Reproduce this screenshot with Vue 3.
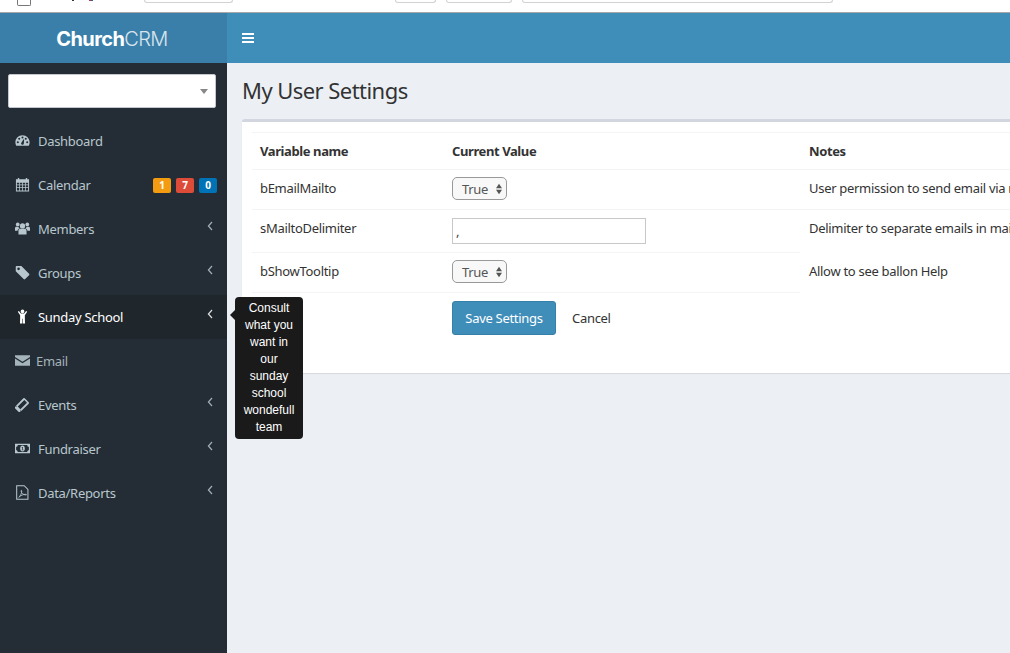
<template>
  <div class="browser-bar">
    <span class="tab-icon"></span>
    <span class="dot" style="margin-left: 41px; background: #334"></span>
    <span class="dot" style="margin-left: 15px; background: #c33"></span>
    <span class="dot" style="background: #26a"></span>
    <span class="pill" style="width: 87px; margin-left: 51px"></span>
    <span class="pill" style="width: 39px; margin-left: 162px"></span>
    <span class="pill" style="width: 64px; margin-left: 10px"></span>
    <span class="pill" style="width: 309px; margin-left: 10px"></span>
  </div>
  <div class="page">
    <aside class="sidebar">
      <div class="logo"><b>Church</b><span>CRM</span></div>
      <div class="search"><i class="caret"></i></div>
      <ul class="menu">
        <li v-for="item in menu" :key="item.label" :class="{ active: item.active, email: item.label === 'Email' }">
          <svg class="ico" viewBox="0 0 16 16" v-html="item.icon"></svg>
          <span class="label">{{ item.label }}</span>
          <svg v-if="item.arrow" class="chev" viewBox="0 0 6 10"><path d="M5 1 1.400 5 5 9" fill="none" stroke="currentColor" stroke-width="1.200"/></svg>
          <span v-if="item.badges" class="badges">
            <em v-for="b in item.badges" :key="b.text" :style="{ background: b.color }">{{ b.text }}</em>
          </span>
        </li>
      </ul>
    </aside>
    <main class="main">
      <header class="topbar">
        <svg class="burger" viewBox="0 0 12 10"><path d="M0 0h12v2H0zM0 4h12v2H0zM0 8h12v2H0z" fill="#fff"/></svg>
      </header>
      <h1>My User Settings</h1>
      <section class="box">
        <div class="row head">
          <div class="c1">Variable name</div>
          <div class="c2">Current Value</div>
          <div class="c3">Notes</div>
        </div>
        <div v-for="r in rows" :key="r.name" class="row" :class="r.cls">
          <div class="c1">{{ r.name }}</div>
          <div class="c2">
            <span v-if="r.select" class="fake-select">True<svg viewBox="0 0 7 12"><path d="M3.500 0 7 5H0zM3.500 12 0 7h7z" fill="#555"/></svg></span>
            <input v-else class="text-input" value="," readonly />
          </div>
          <div class="c3">{{ r.note }}</div>
        </div>
        <div class="actions">
          <button class="save">Save Settings</button>
          <a class="cancel">Cancel</a>
        </div>
      </section>
      <div class="tooltip">Consult what you want in our sunday school wondefull team</div>
    </main>
  </div>
</template>

<script setup>
const menu = [
  { label: 'Dashboard', icon: '<path fill="currentColor" fill-rule="evenodd" d="M8 2.300C3.800 2.300.4 5.700.4 9.900c0 1.300.3 2.500.9 3.600h13.400c.6-1.100.9-2.300.9-3.600 0-4.200-3.400-7.600-7.600-7.600zM3 11a1.100 1.100 0 1 1 0-2.200A1.100 1.100 0 0 1 3 11zm1.500-3.700a1.100 1.100 0 1 1 0-2.200 1.100 1.100 0 0 1 0 2.200zM8 5.800a1.100 1.100 0 1 1 0-2.200 1.100 1.100 0 0 1 0 2.200zm.9 6.500a1.500 1.500 0 0 1-2.300-1.700l2.500-4 .7.200-.4 4.500c0 .4-.2.700-.5 1zm2.600-5a1.100 1.100 0 1 1 0-2.200 1.100 1.100 0 0 1 0 2.200zM13 11a1.100 1.100 0 1 1 0-2.200 1.100 1.100 0 0 1 0 2.200z"/>' },
  { label: 'Calendar', badges: [{ text: '1', color: '#f39c12' }, { text: '7', color: '#dd4b39' }, { text: '0', color: '#0073b7' }], icon: '<path fill="currentColor" fill-rule="evenodd" d="M1 2.500h2V1h1.500v1.500h7V1H13v1.500h2V15.500H1zM2 6v2h2.500V6zm3.300 0v2h2.300V6zm3.100 0v2h2.300V6zm3.100 0v2H14V6zM2 8.800v2h2.500v-2zm3.300 0v2h2.300v-2zm3.100 0v2h2.300v-2zm3.100 0v2H14v-2zM2 11.600v2.900h2.500v-2.900zm3.300 0v2.900h2.300v-2.900zm3.100 0v2.900h2.300v-2.900zm3.100 0v2.900H14v-2.900z"/>' },
  { label: 'Members', arrow: true, icon: '<g fill="currentColor"><circle cx="8" cy="5.300" r="2.800"/><circle cx="2.900" cy="3.600" r="2"/><circle cx="13.100" cy="3.600" r="2"/><path d="M3.700 14.300V10.400C3.700 9 4.700 8.300 6 8.300h4c1.300 0 2.300.7 2.300 2.100v3.900zM0 10.300V7.600c0-1 .7-1.600 1.600-1.600h2c.2.900.7 1.500 1.400 2-1.300.4-2.200 1.100-2.200 2.300zM16 10.300V7.600c0-1-.7-1.600-1.600-1.600h-2c-.2.900-.7 1.500-1.400 2 1.300.4 2.200 1.100 2.200 2.300z"/></g>' },
  { label: 'Groups', arrow: true, icon: '<path fill="currentColor" fill-rule="evenodd" d="M.8 2c0-.6.5-1 1-1h5l8.200 8.200c.5.500.5 1.100 0 1.600L10.800 15c-.5.500-1.100.500-1.600 0L.8 6.700zm3 3.500a1.400 1.400 0 1 0 0-2.800 1.400 1.400 0 0 0 0 2.800z"/>' },
  { label: 'Sunday School', arrow: true, active: true, icon: '<path fill="currentColor" d="M8 .4a2 2 0 1 1 0 4 2 2 0 0 1 0-4zM3 3l1.100-.9 2.200 2.700h3.400l2.200-2.700L13 3l-2.500 3.700v3l.2 5.700H8.300v-5h-.6v5H5.300l.2-5.700v-3z"/>' },
  { label: 'Email', icon: '<path fill="currentColor" d="M0 2.500h16v1.700L8 9.300 0 4.200zM0 5.800l8 5 8-5v7.700H0z"/>' },
  { label: 'Events', arrow: true, icon: '<path fill="currentColor" fill-rule="evenodd" transform="rotate(-45 8 8)" d="M-.5 4h1.700v1h1v-1h11.100a1 1 0 0 1 1 1v6a1 1 0 0 1-1 1H2.200v-1h-1v1H-.5zM2.800 6v4h10V6z"/>' },
  { label: 'Fundraiser', arrow: true, icon: '<path fill="currentColor" fill-rule="evenodd" d="M0 3h16v10H0zm1.200 3.200v3.600c1 0 1.700.7 1.700 2h10.200c0-1.300.7-2 1.700-2V6.200c-1 0-1.700-.7-1.700-2H2.900c0 1.300-.7 2-1.700 2zM8 4.800c1.500 0 2.500 1.400 2.500 3.200S9.500 11.200 8 11.200 5.500 9.800 5.500 8 6.500 4.800 8 4.800zM7.200 6.500v.7h.5v2h-.6v.7h1.900v-.7h-.6V6.500z"/>' },
  { label: 'Data/Reports', arrow: true, icon: '<g fill="none" stroke="currentColor"><path stroke-width="1.100" d="M1.800 .8h8l4 4v10.400h-12z"/><path stroke-width=".9" d="M4 13.200c1.500-1 3.200-4.500 3.200-6.700 0-1.200-.8-1-.7 0 .2 2 2.200 4 5.200 4.200.9 0 .8-.8-.2-.8-2.500 0-5.500 1.200-7.500 3.300"/></g>' },
]

const rows = [
  { name: 'bEmailMailto', select: true, note: 'User permission to send email via mailto: links', cls: 'r1' },
  { name: 'sMailtoDelimiter', note: 'Delimiter to separate emails in mailto: links', cls: 'r2' },
  { name: 'bShowTooltip', select: true, note: 'Allow to see ballon Help', cls: 'r3' },
]
</script>

<style>
html, body { margin: 0; overflow: hidden; }
</style>

<style scoped>
.browser-bar {
  height: 12px;
  display: flex;
  background: #fff;
  border-bottom: 1px solid #a8a8a8;
  overflow: hidden;
}
.tab-icon {
  width: 14px;
  height: 6px;
  margin-left: 17px;
  border: 1px solid #777;
  border-top: 0;
  border-radius: 0 0 2px 2px;
  box-sizing: border-box;
}
.dot { width: 2px; height: 1px; }
.pill {
  height: 2px;
  border: 1px solid #d2d2d2;
  border-top: 0;
  border-radius: 0 0 4px 4px;
}
.page {
  display: flex;
  height: 640px;
  font-family: "Noto Sans", "Lato", sans-serif;
  font-size: 13px;
  letter-spacing: -0.3px;
  color: #333;
  overflow: hidden;
}
.sidebar {
  width: 227px;
  flex: none;
  background: #242d35;
}
.logo {
  height: 50px;
  padding: 1px 3px 0 0;
  box-sizing: border-box;
  background: #397fa9;
  color: #fff;
  display: flex;
  align-items: center;
  justify-content: center;
  font-family: "Inter", sans-serif;
  font-size: 20px;
  letter-spacing: -0.6px;
}
.logo b { font-weight: 700; }
.logo span { font-weight: 300; opacity: .8; }
.search {
  height: 32px;
  margin: 11px 11px 11px 8px;
  background: #fff;
  border: 1px solid #c2c7d0;
  border-radius: 2px;
  position: relative;
}
.caret {
  position: absolute;
  right: 7px;
  top: 14px;
  border-left: 4px solid transparent;
  border-right: 4px solid transparent;
  border-top: 5px solid #888;
}
.menu {
  list-style: none;
  margin: 0;
  padding: 0;
}
.menu li {
  height: 44px;
  display: flex;
  align-items: center;
  padding-left: 15px;
  box-sizing: border-box;
  color: #b8c7ce;
  position: relative;
}
.menu li.active {
  background: #1f272c;
  color: #fff;
}
.menu li.email { color: #a5b3ba; }
.ico {
  width: 15px;
  height: 15px;
  flex: none;
  margin-right: 8px;
  margin-top: -1px;
}
.email .ico { margin-right: 6px; }
.chev {
  position: absolute;
  right: 14px;
  top: 14px;
  width: 6px;
  height: 10px;
  opacity: .85;
}
.badges {
  position: absolute;
  right: 10px;
  top: 15px;
  display: flex;
  gap: 5px;
}
.badges em {
  width: 18px;
  height: 15px;
  line-height: 15px;
  border-radius: 2px;
  color: #fff;
  font-style: normal;
  font-weight: 700;
  font-size: 10px;
  letter-spacing: 0;
  text-align: center;
}
.main {
  flex: 1;
  min-width: 0;
  background: #ecf0f5;
  position: relative;
}
.topbar {
  height: 50px;
  background: #3f8eba;
  display: flex;
  align-items: center;
  padding-left: 15px;
}
.burger { width: 12px; height: 10px; }
h1 {
  margin: 0;
  padding: 14px 15px 0;
  height: 42px;
  font-size: 22px;
  font-weight: 400;
  line-height: 26px;
  letter-spacing: -0.55px;
}
.box {
  margin: 0 0 0 15px;
  width: 783px;
  height: 254px;
  box-sizing: border-box;
  background: #fff;
  border-top: 3px solid #d2d6de;
  border-radius: 3px;
  box-shadow: 0 1px 1px rgba(0, 0, 0, .1);
  padding: 10px 10px 0;
}
.row {
  display: flex;
  border-top: 1px solid #f4f4f4;
  white-space: nowrap;
  box-sizing: border-box;
}
.c1 { width: 200px; padding-left: 8px; flex: none; box-sizing: border-box; }
.c2 { width: 357px; flex: none; }
.c3 { flex: 1; }
.head { height: 37px; align-items: center; font-weight: 700; letter-spacing: -0.4px; }
.r1 { height: 40px; padding-top: 7px; }
.r2 { height: 43px; padding-top: 8px; }
.r3 { height: 41px; padding-top: 7px; border-bottom: 1px solid #f4f4f4; width: 548px; }
.r1 .c1, .r1 .c3, .r3 .c1, .r3 .c3 { margin-top: 2px; }
.r2 .c1, .r2 .c3 { margin-top: 1px; }
.fake-select {
  display: flex;
  align-items: center;
  justify-content: space-between;
  box-sizing: border-box;
  width: 55px;
  height: 23px;
  padding: 0 4px 0 9px;
  background: #f8f8f8;
  border: 1px solid #999;
  border-radius: 5px;
  color: #555;
}
.fake-select svg { width: 6px; height: 12px; }
.text-input {
  display: block;
  box-sizing: border-box;
  width: 194px;
  height: 26px;
  padding: 0 3px;
  border: 1px solid #c8c8c8;
  font: inherit;
  letter-spacing: inherit;
  color: #444;
  outline: 0;
}
.actions {
  padding: 8px 0 0 200px;
  display: flex;
  align-items: center;
}
.save {
  width: 104px;
  height: 34px;
  background: #3f8eba;
  border: 1px solid #367fa9;
  border-radius: 3px;
  color: #fff;
  font: inherit;
  letter-spacing: inherit;
  padding: 0;
}
.cancel { margin-left: 16px; }
.tooltip {
  position: absolute;
  left: 8px;
  top: 284px;
  box-sizing: border-box;
  width: 68px;
  height: 142px;
  padding: 3px 5px;
  background: #1a1a1a;
  border-radius: 4px;
  color: #fff;
  font-family: "Liberation Sans", sans-serif;
  font-size: 12px;
  letter-spacing: 0;
  line-height: 17px;
  text-align: center;
}
.tooltip::before {
  content: "";
  position: absolute;
  left: -5px;
  top: 13px;
  border-top: 5px solid transparent;
  border-bottom: 5px solid transparent;
  border-right: 5px solid #1a1a1a;
}
</style>
